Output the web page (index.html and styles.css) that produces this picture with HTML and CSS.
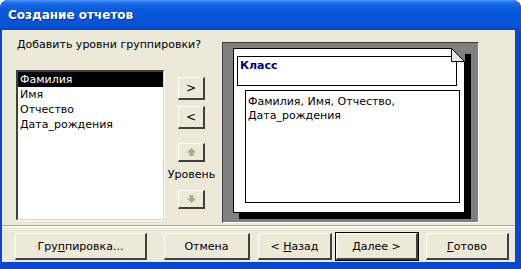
FILE: index.html
```html
<!DOCTYPE html>
<html lang="ru">
<head>
<meta charset="utf-8">
<title>Создание отчетов</title>
<link rel="stylesheet" href="styles.css">
</head>
<body>
<div class="window">
  <div class="titlebar">Создание отчетов</div>
  <div class="client">
    <div class="main">
      <div class="left">
        <div class="prompt">Добавить уровни группировки?</div>
        <div class="left-row">
          <div class="listbox">
            <div class="item selected">Фамилия</div>
            <div class="item">Имя</div>
            <div class="item">Отчество</div>
            <div class="item">Дата_рождения</div>
          </div>
          <div class="btncol">
            <div class="btn small b-add">&gt;</div>
            <div class="btn small b-rem">&lt;</div>
            <div class="btn small arrow b-up">
              <svg width="9" height="8" viewBox="0 0 9 8"><path d="M4.5 0 L9 4.5 H6.5 V8 H2.5 V4.5 H0 Z" fill="#ACA899"/></svg>
            </div>
            <div class="level">Уровень</div>
            <div class="btn small arrow b-down">
              <svg width="9" height="8" viewBox="0 0 9 8"><path d="M4.5 8 L9 3.5 H6.5 V0 H2.5 V3.5 H0 Z" fill="#ACA899"/></svg>
            </div>
          </div>
        </div>
      </div>
      <div class="preview">
        <div class="page">
          <svg class="fold" width="14" height="14" viewBox="0 0 14 14"><path d="M0 0 H14 V14 Z" fill="#808080"/><path d="M0.5 0.5 L13.5 13.5 H0.5 Z" fill="#E8E8E8" stroke="#000" stroke-width="1"/></svg>
          <div class="band">Класс</div>
          <div class="detail">Фамилия, Имя, Отчество,<br>Дата_рождения</div>
        </div>
      </div>
    </div>
    <div class="separator"></div>
    <div class="buttons">
      <div class="btn wide b-group"><span>Гру<u>п</u>пировка...</span></div>
      <div class="btn wide b-cancel"><span>Отмена</span></div>
      <div class="btn wide b-back"><span>&lt; <u>Н</u>азад</span></div>
      <div class="btn wide default b-next"><span><u>Д</u>алее &gt;</span></div>
      <div class="btn wide b-done"><span><u>Г</u>отово</span></div>
    </div>
  </div>
</div>
</body>
</html>
```
FILE: styles.css
```css
html, body {
  margin: 0;
  padding: 0;
  background: #fff;
}
body {
  width: 521px;
  height: 269px;
  overflow: hidden;
  font-family: "DejaVu Sans", "Liberation Sans", sans-serif;
  font-size: 11px;
  color: #000;
}
.window {
  width: 521px;
  height: 269px;
  display: flex;
  flex-direction: column;
  background: #0A46D0;
  border-radius: 8px 8px 0 0;
  box-sizing: border-box;
  padding: 0 6px 7px 2px;
}
.titlebar {
  height: 30px;
  margin: 0 -6px 0 -2px;
  border-radius: 8px 8px 0 0;
  background: linear-gradient(#4C95F8 0, #1E6CEB 3px, #0A5DDB 8px, #0657DA 50%, #0A52D4 85%, #0845C4 100%);
  color: #fff;
  font-family: "DejaVu Sans", sans-serif;
  font-weight: bold;
  font-size: 12px;
  line-height: 30px;
  padding-left: 8px;
  text-shadow: 1px 1px 0 #0B2A8A;
  box-sizing: border-box;
}
.client {
  flex: 1;
  background: #ECE9D8;
  display: flex;
  flex-direction: column;
}
.main {
  display: flex;
  padding: 8px 0 0 14px;
}
.left {
  width: 206px;
  display: flex;
  flex-direction: column;
}
.prompt {
  line-height: 14px;
  padding-left: 1px;
  margin-bottom: 18px;
}
.left-row {
  display: flex;
}
.listbox {
  width: 148px;
  height: 150px;
  box-sizing: border-box;
  background: #fff;
  border-style: solid;
  border-width: 2px 1px 1px 2px;
  border-color: #404040 #D4D0C8 #D4D0C8 #404040;
  box-shadow: 1px 1px 0 #fff;
  padding: 0;
}
.item {
  height: 15px;
  line-height: 15px;
  padding-left: 2px;
  white-space: nowrap;
}
.item.selected {
  background: #000;
  color: #fff;
}
.btncol {
  width: 27px;
  margin-left: 14px;
  padding-top: 7px;
  display: flex;
  flex-direction: column;
  align-items: center;
}
.btn {
  box-sizing: border-box;
  background: #ECE9D8;
  border-style: solid;
  border-width: 1px 2px 2px 1px;
  border-color: #fff #404040 #404040 #fff;
  display: flex;
  align-items: center;
  justify-content: center;
  white-space: nowrap;
}
.small {
  width: 27px;
  height: 23px;
  font-size: 12px;
}
.b-rem {
  margin-top: 6px;
}
.arrow {
  height: 19px;
}
.b-up {
  margin-top: 14px;
}
.level {
  margin-top: 5px;
  line-height: 15px;
  white-space: nowrap;
}
.b-down {
  margin-top: 8px;
}
.preview {
  width: 257px;
  height: 181px;
  box-sizing: border-box;
  margin-top: 4px;
  background: #808080;
  border: 1px solid;
  border-color: #404040 #fff #fff #404040;
  padding: 5px 0 0 10px;
}
.page {
  position: relative;
  width: 232px;
  height: 165px;
  box-sizing: border-box;
  background: #fff;
  border: 1px solid #000;
  box-shadow: 6px 6px 0 #000;
  display: flex;
  flex-direction: column;
}
.fold {
  position: absolute;
  top: -1px;
  right: -1px;
}
.band {
  margin: 7px 7px 0 3px;
  height: 30px;
  box-sizing: border-box;
  border: 1px solid #000;
  color: #000080;
  font-weight: bold;
  font-size: 11px;
  padding: 2px 0 0 2px;
  line-height: 14px;
}
.detail {
  margin: 4px 0 0 11px;
  width: 215px;
  height: 113px;
  box-sizing: border-box;
  border: 1px solid #000;
  padding: 4px 0 0 2px;
  line-height: 14px;
}
.separator {
  margin: 2px 0 0 0;
  border-top: 1px solid #ACA899;
  border-bottom: 1px solid #fff;
}
.buttons {
  display: flex;
  padding: 6px 0 0 13px;
}
.wide {
  height: 27px;
}
.b-group { width: 132px; }
.b-cancel { width: 86px; margin-left: 17px; }
.b-back { width: 74px; margin-left: 8px; }
.b-next { width: 82px; margin-left: 4px; }
.b-done { width: 83px; margin-left: 8px; }
.default {
  outline: 1px solid #000;
  outline-offset: 0;
}
u {
  text-decoration: underline;
  text-underline-offset: 1px;
}
```
